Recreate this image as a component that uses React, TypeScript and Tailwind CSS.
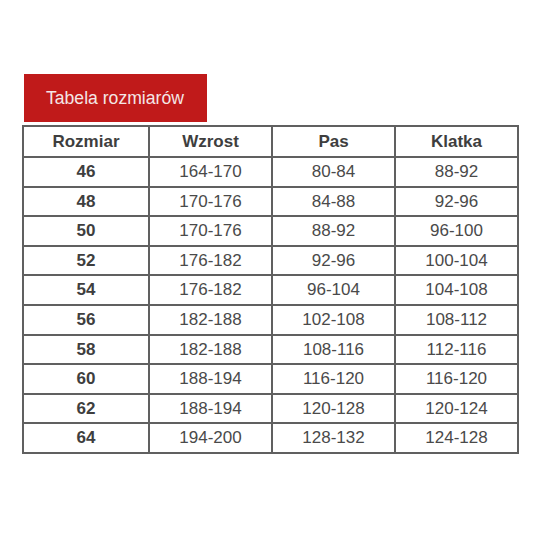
const rows = [
  ["46", "164-170", "80-84", "88-92"],
  ["48", "170-176", "84-88", "92-96"],
  ["50", "170-176", "88-92", "96-100"],
  ["52", "176-182", "92-96", "100-104"],
  ["54", "176-182", "96-104", "104-108"],
  ["56", "182-188", "102-108", "108-112"],
  ["58", "182-188", "108-116", "112-116"],
  ["60", "188-194", "116-120", "116-120"],
  ["62", "188-194", "120-128", "120-124"],
  ["64", "194-200", "128-132", "124-128"],
];

const headers = ["Rozmiar", "Wzrost", "Pas", "Klatka"];

export default function App() {
  return (
    <div className="h-[536px] w-[536px] bg-white pl-[22px] pt-[74px] font-['Liberation_Sans',Arial,sans-serif]">
      <div className="ml-[2px] flex h-[48px] w-[183px] items-center bg-[#c01a1a] pl-[22px] text-[17.6px] text-[#f4e6e6]">
        Tabela rozmiarów
      </div>
      <table className="mt-[3px] w-[495px] table-fixed border-collapse border-2 border-[#606060] text-center text-[17px]">
        <colgroup>
          <col className="w-[126px]" />
          <col className="w-[123px]" />
          <col className="w-[123px]" />
          <col className="w-[123px]" />
        </colgroup>
        <thead>
          <tr className="h-[31px]">
            {headers.map((h) => (
              <th key={h} className="border-2 border-[#606060] p-0 font-bold text-[#3e3e3e]">
                {h}
              </th>
            ))}
          </tr>
        </thead>
        <tbody>
          {rows.map((r) => (
            <tr key={r[0]} className="h-[29.6px]">
              {r.map((cell, i) => (
                <td
                  key={i}
                  className={
                    "border-2 border-[#606060] p-0 " +
                    (i === 0 ? "font-bold text-[#3e3e3e]" : "text-[#4a4a4a]")
                  }
                >
                  {cell}
                </td>
              ))}
            </tr>
          ))}
        </tbody>
      </table>
    </div>
  );
}
